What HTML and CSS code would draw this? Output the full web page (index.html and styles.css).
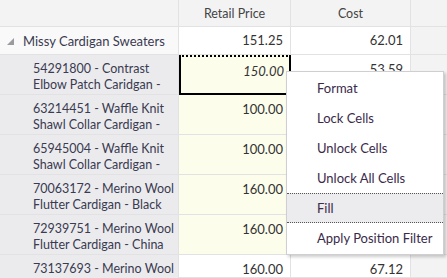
FILE: index.html
```html
<!DOCTYPE html>
<html lang="en">
<head>
    <meta charset="UTF-8">
    <title>Cardigans</title>
    <link rel="stylesheet" href="styles.css">
</head>
<body>
<div class="grid">
    <div class="head"></div>
    <div class="head">Retail Price</div>
    <div class="head">Cost</div>
    <div class="head filler"></div>

    <div class="cell group"><span class="caret"></span>Missy Cardigan Sweaters</div>
    <div class="cell num">151.25</div>
    <div class="cell num">62.01</div>
    <div class="cell filler"></div>

    <div class="cell name">54291800 - Contrast<br>Elbow Patch Caridgan -</div>
    <div class="cell num edit selected"><i>150.00</i></div>
    <div class="cell num">53.59</div>
    <div class="cell filler"></div>

    <div class="cell name">63214451 - Waffle Knit<br>Shawl Collar Cardigan -</div>
    <div class="cell num edit">100.00</div>
    <div class="cell num"></div>
    <div class="cell filler"></div>

    <div class="cell name">65945004 - Waffle Knit<br>Shawl Collar Cardigan -</div>
    <div class="cell num edit">100.00</div>
    <div class="cell num"></div>
    <div class="cell filler"></div>

    <div class="cell name">70063172 - Merino Wool<br>Flutter Cardigan - Black</div>
    <div class="cell num edit">160.00</div>
    <div class="cell num"></div>
    <div class="cell filler"></div>

    <div class="cell name">72939751 - Merino Wool<br>Flutter Cardigan - China</div>
    <div class="cell num edit">160.00</div>
    <div class="cell num"></div>
    <div class="cell filler"></div>

    <div class="cell name last">73137693 - Merino Wool</div>
    <div class="cell num">160.00</div>
    <div class="cell num">67.12</div>
    <div class="cell filler"></div>
</div>

<ul class="menu">
    <li>Format</li>
    <li>Lock Cells</li>
    <li>Unlock Cells</li>
    <li>Unlock All Cells</li>
    <li class="active">Fill</li>
    <li>Apply Position Filter</li>
</ul>
</body>
</html>
```

FILE: styles.css
```css
html * {
    box-sizing: border-box;
}

html, body {
    height: 278px;
    overflow: hidden;
}

body {
    margin: 0;
    color: #333;
    font-family: Lato, "Open Sans", sans-serif;
    font-size: 13px;
    background: #fff;
}

.grid {
    display: grid;
    grid-template-columns: 179px 112px 120px 1fr;
    grid-template-rows: 27px 28px repeat(5, 40px) 23px;
}

.head {
    background: #f3f3f4;
    border-right: 1px solid #e2e2e4;
    border-bottom: 1px solid #e2e2e4;
    text-align: center;
    line-height: 27px;
    font-size: 12.5px;
    color: #444;
}

.cell {
    border-right: 1px solid #e2e2e4;
    border-bottom: 1px solid #e2e2e4;
    overflow: hidden;
    padding: 0 7px 0 0;
}

.group {
    background: #f9f9fa;
    padding: 0 0 0 7px;
    color: #3a3a50;
    display: flex;
    align-items: center;
}

.caret {
    width: 0;
    height: 0;
    border-left: 7px solid transparent;
    border-bottom: 7px solid #9a9aa0;
    margin: 1px 9px 0 0;
}

.name {
    background: #ebebee;
    padding: 6px 0 0 33px;
    font-size: 12.5px;
    line-height: 16px;
    white-space: nowrap;
    color: #3a3a50;
}

.name.last {
    border-bottom: none;
}

.num {
    text-align: right;
    line-height: 27px;
}

.name ~ .num {
    line-height: 16px;
    padding-top: 6px;
}

.edit {
    background: #fdfdeb;
}

.selected {
    border: 2px solid #000;
    border-top-style: dotted;
    padding: 4px 5px 0 0;
}

.filler {
    background: #f3f3f4;
    border-right: none;
}

.menu {
    position: absolute;
    left: 286px;
    top: 71px;
    width: 158px;
    margin: 0;
    padding: 1px 0;
    list-style: none;
    background: #fff;
    border: 1px solid #cfcfd2;
    box-shadow: 2px 2px 3px rgba(0, 0, 0, 0.2);
    color: #3a2a4a;
}

.menu li {
    height: 30px;
    line-height: 30px;
    padding-left: 30px;
}

.menu li.active {
    background: #ececee;
    border-top: 1px dotted #555;
    border-bottom: 1px dotted #555;
    line-height: 28px;
}
```
